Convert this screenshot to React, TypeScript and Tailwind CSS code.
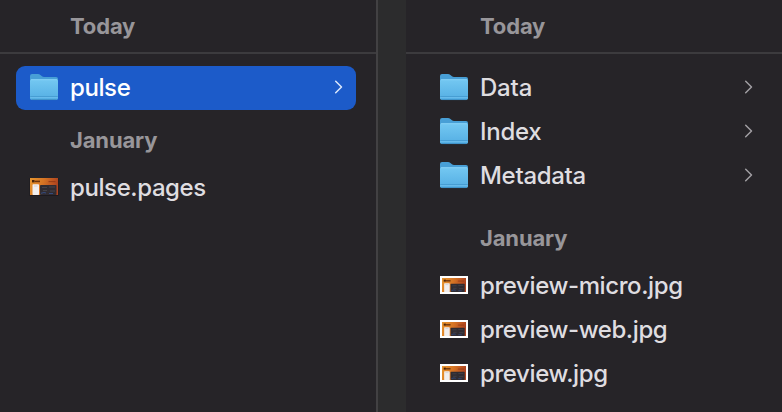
import React from "react";

function FolderIcon() {
  return (
    <svg width="30" height="30" viewBox="0 0 30 30" className="shrink-0" aria-hidden="true">
      <defs>
        <linearGradient id="folderFront" x1="0" y1="0" x2="0" y2="1">
          <stop offset="0" stopColor="#74c8f2" />
          <stop offset="1" stopColor="#54aee3" />
        </linearGradient>
      </defs>
      <path d="M1 26V3Q1 1 3 1H9q1.400 0 2.400.9l1.600 1.300q.8.700 2 .7H27q2 0 2 2V26z" fill="#489fd6" />
      <path d="M1 7.800Q1 6.200 2.600 6.200H27.400Q29 6.200 29 7.800V25q0 2-2 2H3q-2 0-2-2z" fill="url(#folderFront)" />
      <path d="M2 6.700H28" stroke="#8bd3f6" strokeWidth=".8" />
      <path d="M1.300 23.500H28.700" stroke="#3f95cb" strokeWidth=".8" />
      <path d="M1.300 24.400H28.700" stroke="#70c0ec" strokeWidth=".8" />
      <path d="M2.500 26.600H27.500" stroke="#3685bb" strokeWidth=".7" />
    </svg>
  );
}

function Artwork() {
  return (
    <>
      <defs>
        <linearGradient id="artwork" x1="0" y1="0" x2="1" y2=".2">
          <stop offset="0" stopColor="#e8962f" />
          <stop offset=".5" stopColor="#d67424" />
          <stop offset="1" stopColor="#ad431f" />
        </linearGradient>
      </defs>
      <rect width="28" height="17" fill="url(#artwork)" />
      <rect x="2" y="2" width="2.500" height="2.400" fill="#4a2408" />
      <rect x="4.500" y="2.600" width="5.500" height="1.600" fill="#6b330c" />
      <rect x="18.500" y="3.300" width="7" height=".8" fill="#8a3415" />
      <rect x="10" y="7" width="16.500" height="10" rx=".8" fill="#302c32" />
      <path d="M12 9.500h5M19 9h6M13 12.500h4M20 13h5" stroke="#4b494f" strokeWidth=".8" />
      <path d="M11 15.300l3-.8 2 .5M19 15.500h4" stroke="#344e88" strokeWidth=".9" fill="none" />
      <rect x="2.500" y="6.300" width="6.500" height="10.700" rx=".7" fill="#f1eeee" />
      <path d="M4 8h3.500" stroke="#c2bfc4" strokeWidth=".6" />
    </>
  );
}

function PagesThumb() {
  return (
    <svg width="30" height="20" viewBox="-1 -1 30 20" className="mb-[2px] shrink-0" aria-hidden="true">
      <rect x="-.5" y="0" width="29" height="18" fill="#151317" opacity=".6" />
      <Artwork />
    </svg>
  );
}

function ImageThumb() {
  return (
    <svg width="30" height="20" viewBox="0 0 30 20" className="mb-[2px] shrink-0" aria-hidden="true">
      <rect x="1" y="1" width="28" height="18" fill="#fff" />
      <svg x="3" y="3" width="24" height="14" viewBox="0 0 28 17" preserveAspectRatio="none">
        <Artwork />
      </svg>
    </svg>
  );
}

function Chevron({ selected = false }: { selected?: boolean }) {
  return (
    <svg width="10" height="16" viewBox="0 0 10 16" className={`mb-[2px] ml-auto shrink-0 ${selected ? "text-[#dce8fb]" : "text-[#a19fa3]"}`} aria-hidden="true">
      <path d="M1.700 2.300L7.500 8L1.700 13.700" fill="none" stroke="currentColor" strokeWidth="1.500" strokeLinecap="round" strokeLinejoin="round" />
    </svg>
  );
}

type RowProps = { name: string; kind: "folder" | "pages" | "image"; selected?: boolean; spacing: string };

function Row({ name, kind, selected = false, spacing }: RowProps) {
  return (
    <div className={`flex h-11 items-center rounded-[9px] pr-3 pl-[13px] ${selected ? "bg-[#1c5bc9] text-white" : "text-[#dfdde0]"}`}>
      {kind === "folder" && <FolderIcon />}
      {kind === "pages" && <PagesThumb />}
      {kind === "image" && <ImageThumb />}
      <span className={`ml-[11px] text-[24px] leading-[44px] font-medium whitespace-nowrap ${spacing}`}>{name}</span>
      {kind === "folder" && <Chevron selected={selected} />}
    </div>
  );
}

function Heading({ children }: { children: React.ReactNode }) {
  return <h2 className="text-[22px] leading-8 font-bold tracking-[-0.15px] text-[#98969a]">{children}</h2>;
}

export default function App() {
  return (
    <main className="flex h-[412px] w-[782px] overflow-hidden bg-[#262428] font-['Inter',sans-serif]">
      <section className="w-[376px]">
        <header className="h-[54px] border-b-2 border-[#3c3b3e] pt-[10px] pl-[70px]"><Heading>Today</Heading></header>
        <div className="px-[16px] pt-3 pr-5">
          <Row name="pulse" kind="folder" selected spacing="tracking-[-0.4px]" />
          <div className="h-14 pt-[14px] pl-[54px]"><Heading>January</Heading></div>
          <Row name="pulse.pages" kind="pages" spacing="tracking-[-0.4px]" />
        </div>
      </section>
      <div className="w-[30px] border-l-2 border-[#424143] bg-[#2c2c2d]" />
      <section className="w-[376px]">
        <header className="h-[54px] border-b-2 border-[#3c3b3e] pt-[10px] pl-[74px]"><Heading>Today</Heading></header>
        <div className="pt-3 pr-4 pl-5">
          <Row name="Data" kind="folder" spacing="tracking-[-0.2px]" />
          <Row name="Index" kind="folder" spacing="tracking-[-0.3px]" />
          <Row name="Metadata" kind="folder" spacing="tracking-[-0.3px]" />
          <div className="h-[66px] pt-6 pl-[54px]"><Heading>January</Heading></div>
          <Row name="preview-micro.jpg" kind="image" spacing="tracking-[-0.4px]" />
          <Row name="preview-web.jpg" kind="image" spacing="tracking-[-0.4px]" />
          <Row name="preview.jpg" kind="image" spacing="tracking-[-0.4px]" />
        </div>
      </section>
    </main>
  );
}
